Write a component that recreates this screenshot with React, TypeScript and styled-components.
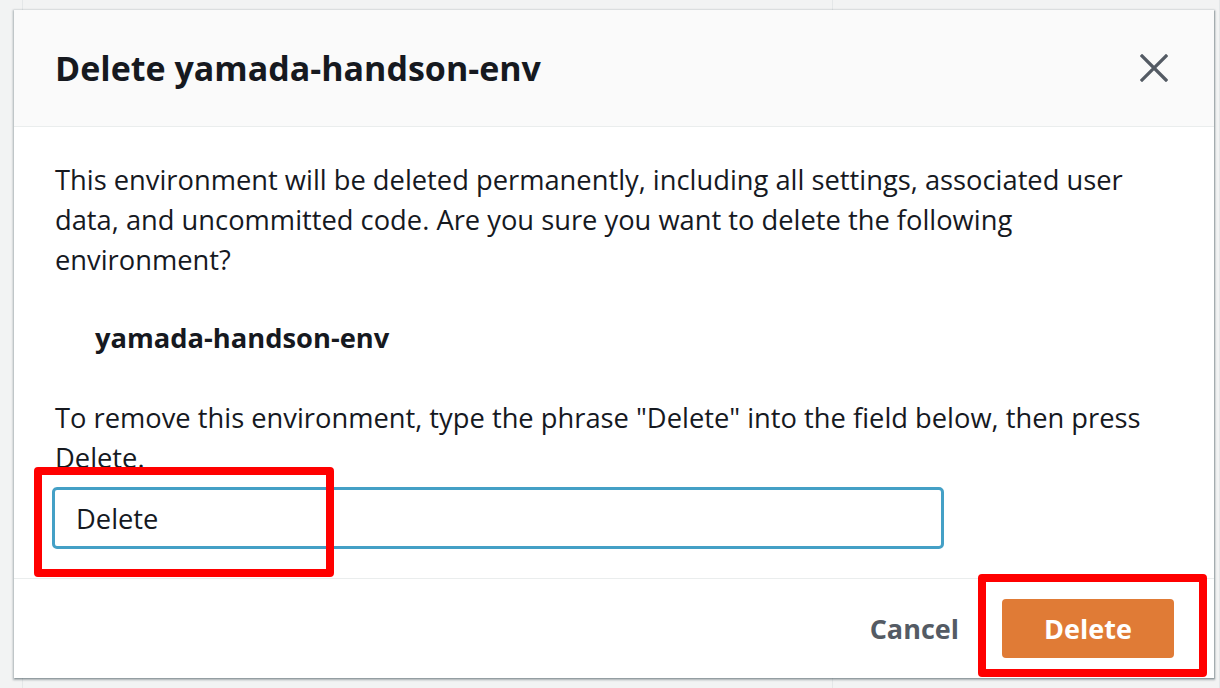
import React, { useState } from 'react'
import styled, { createGlobalStyle } from 'styled-components'

const GlobalStyle = createGlobalStyle`
  html, body {
    margin: 0;
    padding: 0;
    background: #f2f3f3;
  }
  body {
    font-family: "Open Sans", "Noto Sans", Arial, sans-serif;
    color: #16191f;
  }
`

const Page = styled.div`
  position: relative;
  width: 1220px;
  height: 688px;
  overflow: hidden;
  background: #f2f3f3;
`

const BackCard = styled.div`
  margin: 0 0 0 22px;
  height: 100%;
  display: grid;
  grid-template-columns: 810px 1fr;
  border-left: 1px solid #e4e7e8;
`

const BackColumn = styled.div`
  border-right: 1px solid #e4e7e8;
  display: flex;
  flex-direction: column;
  justify-content: flex-end;
  padding: 0 0 0 40px;
`

const BackLabel = styled.div`
  font-size: 28px;
  color: #c2cacb;
  line-height: 20px;
  height: 8px;
  overflow: hidden;
  transform: translateY(12px);
`

const Modal = styled.div`
  position: absolute;
  left: 14px;
  top: 10px;
  width: 1200px;
  height: 668px;
  background: #fff;
  display: flex;
  flex-direction: column;
  box-shadow: 0 1px 2px 1px rgba(0, 28, 36, 0.3), 1px 1px 1px 0 rgba(0, 28, 36, 0.15);
`

const Header = styled.div`
  height: 116px;
  flex: none;
  background: #fafafa;
  border-bottom: 1px solid #eaeded;
  display: flex;
  align-items: center;
  justify-content: space-between;
  padding: 0 44px 0 41px;
`

const Title = styled.h2`
  margin: 0;
  font-size: 34px;
  font-weight: 700;
  color: #16191f;
`

const CloseButton = styled.button`
  border: none;
  background: none;
  padding: 0;
  width: 32px;
  height: 32px;
  display: flex;
  align-items: center;
  justify-content: center;
  color: #545b64;
  cursor: pointer;
`

const Body = styled.div`
  flex: 1;
  padding: 33px 30px 0 41px;
  font-size: 27.3px;
  line-height: 40px;
`

const Paragraph = styled.p`
  margin: 0;
`

const EnvName = styled.div`
  margin: 38px 0 40px 40px;
  font-weight: 700;
`

const ConfirmInput = styled.input`
  display: block;
  box-sizing: border-box;
  margin: 9px 0 0 -3px;
  width: 892px;
  height: 62px;
  border: 3px solid #44a0c6;
  border-radius: 5px;
  padding: 0 21px;
  font-family: inherit;
  font-size: 27.3px;
  color: #16191f;
  outline: none;
`

const Footer = styled.div`
  height: 99px;
  flex: none;
  border-top: 1px solid #eaeded;
  display: flex;
  align-items: center;
  justify-content: flex-end;
  gap: 43px;
  padding: 0 40px 0 0;
`

const FooterButton = styled.button<{ $primary?: boolean }>`
  font-family: inherit;
  font-size: 27px;
  font-weight: 700;
  height: 59px;
  border-radius: 4px;
  border: none;
  cursor: pointer;
  padding: 0;
  width: ${p => (p.$primary ? '172px' : 'auto')};
  background: ${p => (p.$primary ? '#e07b36' : 'transparent')};
  color: ${p => (p.$primary ? '#fff' : '#545b64')};
`

const Highlight = styled.div<{ $left: number; $top: number; $width: number; $height: number }>`
  position: absolute;
  left: ${p => p.$left}px;
  top: ${p => p.$top}px;
  width: ${p => p.$width}px;
  height: ${p => p.$height}px;
  box-sizing: border-box;
  border: 8px solid #ff0000;
  border-radius: 4px;
  pointer-events: none;
`

const CloseIcon = () => (
  <svg width="28" height="28" viewBox="0 0 28 28" fill="none">
    <path d="M2 2 L26 26 M26 2 L2 26" stroke="currentColor" strokeWidth="3.2" strokeLinecap="square" />
  </svg>
)

const App = () => {
  const [value, setValue] = useState('Delete')
  const envName = 'yamada-handson-env'

  return (
    <Page>
      <GlobalStyle />
      <BackCard>
        <BackColumn>
          <BackLabel>Owner Arn</BackLabel>
        </BackColumn>
        <BackColumn />
      </BackCard>
      <Modal>
        <Header>
          <Title>Delete {envName}</Title>
          <CloseButton aria-label="Close">
            <CloseIcon />
          </CloseButton>
        </Header>
        <Body>
          <Paragraph>
            This environment will be deleted permanently, including all settings, associated user data, and
            uncommitted code. Are you sure you want to delete the following environment?
          </Paragraph>
          <EnvName>{envName}</EnvName>
          <Paragraph>
            To remove this environment, type the phrase "Delete" into the field below, then press Delete.
          </Paragraph>
          <ConfirmInput value={value} onChange={e => setValue(e.target.value)} />
        </Body>
        <Footer>
          <FooterButton>Cancel</FooterButton>
          <FooterButton $primary>Delete</FooterButton>
        </Footer>
      </Modal>
      <Highlight $left={34} $top={467} $width={300} $height={110} />
      <Highlight $left={978} $top={574} $width={229} $height={103} />
    </Page>
  )
}

export default App
